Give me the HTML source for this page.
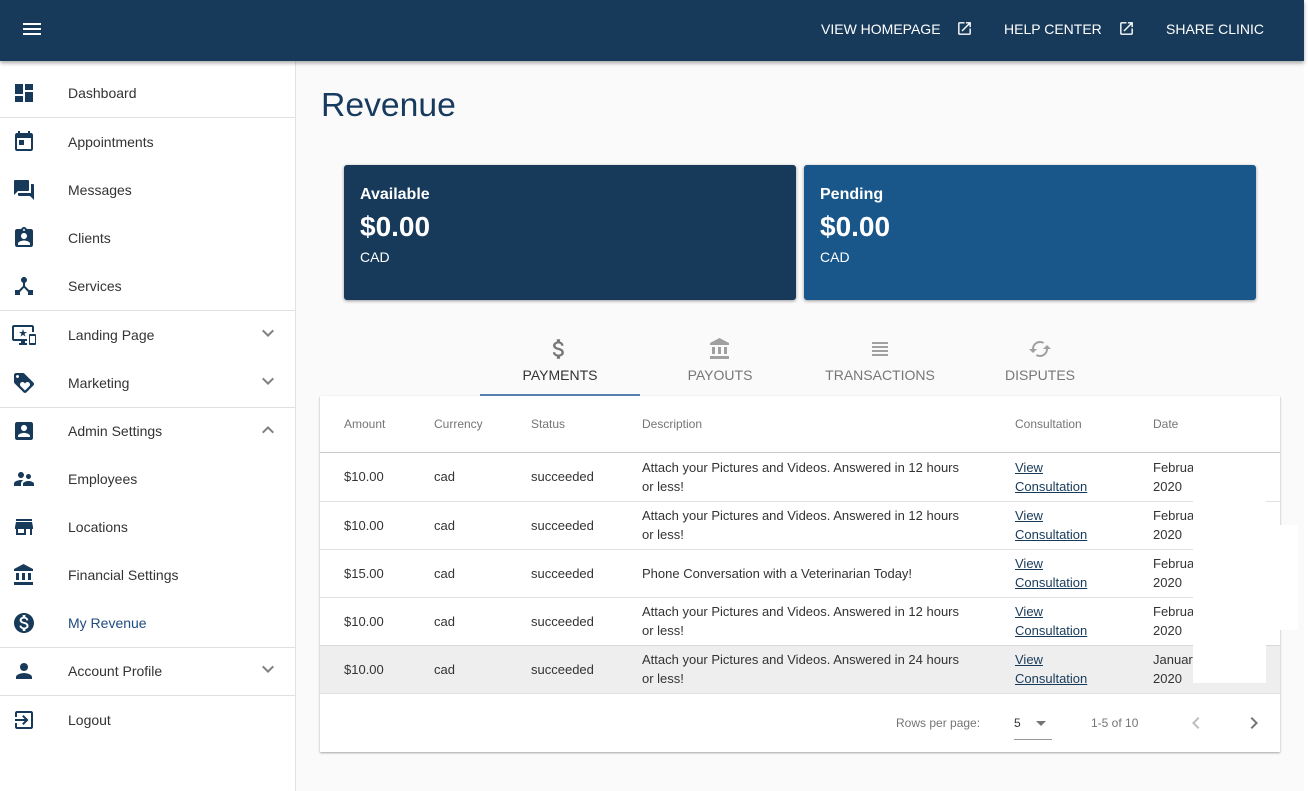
<!DOCTYPE html>
<html><head><meta charset="utf-8"><title>Revenue</title>
<style>
*{box-sizing:border-box}
html,body{margin:0;padding:0;width:1308px;height:791px;overflow:hidden;background:#fff;font-family:"Liberation Sans",sans-serif}
.a{position:absolute;white-space:nowrap}
#main{left:296px;top:61px;width:1008px;height:730px;background:#fafafa}
#top{left:0;top:0;width:1304px;height:61px;background:#173a5a;box-shadow:0 2px 4px rgba(0,0,0,.35);z-index:5}
#side{left:0;top:61px;width:296px;height:730px;background:#fff;border-right:1px solid #e2e2e2}
.t{color:#fff;font-size:14px;line-height:20px;top:19px}
.n{left:68px;font-size:14px;line-height:20px;color:#333}
.h{left:0;width:295px;height:1px;background:#e0e0e0}
svg{position:absolute;display:block}
.i{left:12px;width:24px;height:24px;fill:#173a5a}
.c{left:256px;width:24px;height:24px;fill:#808080}
.card{top:165px;height:135px;width:452px;border-radius:3px;box-shadow:0 1px 3px rgba(0,0,0,.4);color:#fff}
.card b,.card i,.card span{position:absolute;left:16px;font-style:normal;white-space:nowrap}
.card b{top:18px;font-size:16px;line-height:20px;padding-top:2px}
.card i{top:44px;font-size:28px;line-height:36px;font-weight:bold}
.card span{top:83px;font-size:14px;line-height:18px}
.tab{top:366px;width:160px;text-align:center;font-size:14px;line-height:18px;color:#777}
.ti{top:337px;width:24px;height:24px;fill:#a0a0a0}
#tbl{left:320px;top:396px;width:960px;height:356px;background:#fff;box-shadow:0 1px 2px rgba(0,0,0,.35)}
.th{top:416px;font-size:12px;line-height:16px;color:#757575}
.l{left:320px;width:960px;height:1px;background:#e0e0e0}
.d{font-size:13px;line-height:19px;color:#333}
.lk{left:1015px;font-size:13px;line-height:19px;color:#173a5a;text-decoration:underline}
.p{top:715px;font-size:12px;line-height:16px;color:#757575}
</style></head><body>
<svg width="0" height="0" style="position:absolute"><defs>
<symbol id="dash" viewBox="0 0 24 24"><path d="M3 13h8V3H3v10zm0 8h8v-6H3v6zm10 0h8V11h-8v10zm0-18v6h8V3h-8z"/></symbol>
<symbol id="today" viewBox="0 0 24 24"><path d="M19 3h-1V1h-2v2H8V1H6v2H5c-1.11 0-1.99.9-1.99 2L3 19c0 1.1.89 2 2 2h14c1.1 0 2-.9 2-2V5c0-1.1-.9-2-2-2zm0 16H5V8h14v11zM7 10h5v5H7z"/></symbol>
<symbol id="forum" viewBox="0 0 24 24"><path d="M21 6h-2v9H6v2c0 .55.45 1 1 1h11l4 4V7c0-.55-.45-1-1-1zm-4 6V3c0-.55-.45-1-1-1H3c-.55 0-1 .45-1 1v14l4-4h10c.55 0 1-.45 1-1z"/></symbol>
<symbol id="ind" viewBox="0 0 24 24"><path d="M19 3h-4.18C14.4 1.84 13.3 1 12 1c-1.3 0-2.4.84-2.82 2H5c-1.1 0-2 .9-2 2v14c0 1.1.9 2 2 2h14c1.1 0 2-.9 2-2V5c0-1.1-.9-2-2-2zm-7 0c.55 0 1 .45 1 1s-.45 1-1 1-1-.45-1-1 .45-1 1-1zm0 4c1.66 0 3 1.34 3 3s-1.34 3-3 3-3-1.34-3-3 1.34-3 3-3zm6 12H6v-1.4c0-2 4-3.1 6-3.1s6 1.1 6 3.1V19z"/></symbol>
<symbol id="hub" viewBox="0 0 24 24"><path d="M17 16l-4-4V8.82C14.16 8.4 15 7.3 15 6c0-1.66-1.34-3-3-3S9 4.34 9 6c0 1.3.84 2.4 2 2.82V12l-4 4H3v5h5v-3.05l4-4.2 4 4.2V21h5v-5h-4z"/></symbol>
<symbol id="dev" viewBox="0 0 24 24"><path d="M23 11.01L18 11c-.55 0-1 .45-1 1v9c0 .55.45 1 1 1h5c.55 0 1-.45 1-1v-9c0-.55-.45-.99-1-.99zM23 20h-5v-7h5v7zM20 2H2C.89 2 0 2.89 0 4v12c0 1.1.89 2 2 2h7v2H7v2h8v-2h-2v-2h2v-2H2V4h18v5h2V4c0-1.11-.9-2-2-2zm-8.03 7L11 6l-.97 3H7l2.47 1.76-.94 2.91 2.47-1.8 2.47 1.8-.94-2.91L15 9h-3.03z"/></symbol>
<symbol id="loy" viewBox="0 0 24 24"><path d="M21.41 11.58l-9-9C12.05 2.22 11.55 2 11 2H4c-1.1 0-2 .9-2 2v7c0 .55.22 1.05.59 1.42l9 9c.36.36.86.58 1.41.58.55 0 1.05-.22 1.41-.59l7-7c.37-.36.59-.86.59-1.41 0-.55-.23-1.06-.59-1.42zM5.5 7C4.67 7 4 6.33 4 5.5S4.67 4 5.5 4 7 4.67 7 5.5 6.33 7 5.5 7zm11.77 8.27L13 19.54l-4.27-4.27C8.28 14.81 8 14.19 8 13.5c0-1.38 1.12-2.5 2.5-2.5.69 0 1.32.28 1.77.74l.73.72.73-.73c.45-.45 1.08-.73 1.77-.73 1.38 0 2.5 1.12 2.5 2.5 0 .69-.28 1.32-.73 1.77z"/></symbol>
<symbol id="box" viewBox="0 0 24 24"><path d="M3 5v14c0 1.1.89 2 2 2h14c1.1 0 2-.9 2-2V5c0-1.1-.9-2-2-2H5c-1.11 0-2 .9-2 2zm12 4c0 1.66-1.34 3-3 3s-3-1.34-3-3 1.34-3 3-3 3 1.34 3 3zm-9 8c0-2 4-3.1 6-3.1s6 1.1 6 3.1v1H6v-1z"/></symbol>
<symbol id="sup" viewBox="0 0 24 24"><path d="M16.5 12c1.38 0 2.49-1.12 2.49-2.5S17.88 7 16.5 7C15.12 7 14 8.12 14 9.5s1.12 2.5 2.5 2.5zM9 11c1.66 0 2.99-1.34 2.99-3S10.66 5 9 5C7.34 5 6 6.34 6 8s1.34 3 3 3zm7.5 3c-1.83 0-5.5.92-5.5 2.75V19h11v-2.25c0-1.83-3.67-2.75-5.5-2.75zM9 13c-2.33 0-7 1.17-7 3.5V19h7v-2.25c0-.85.33-2.34 2.37-3.47C10.5 13.1 9.66 13 9 13z"/></symbol>
<symbol id="store" viewBox="0 0 24 24"><path d="M20 4H4v2h16V4zm1 10v-2l-1-5H4l-1 5v2h1v6h10v-6h4v6h2v-6h1zm-9 4H6v-4h6v4z"/></symbol>
<symbol id="bank" viewBox="0 0 24 24"><path d="M4 10v7h3v-7H4zm6 0v7h3v-7h-3zM2 22h19v-3H2v3zm14-12v7h3v-7h-3zm-4.5-9L2 6v2h19V6l-9.5-5z"/></symbol>
<symbol id="mon" viewBox="0 0 24 24"><path d="M12 2C6.48 2 2 6.48 2 12s4.48 10 10 10 10-4.48 10-10S17.52 2 12 2zm1.41 16.09V20h-2.67v-1.93c-1.71-.36-3.16-1.46-3.27-3.4h1.96c.1 1.05.82 1.87 2.65 1.87 1.96 0 2.4-.98 2.4-1.59 0-.83-.44-1.61-2.67-2.14-2.48-.6-4.18-1.62-4.18-3.67 0-1.72 1.39-2.84 3.11-3.21V4h2.67v1.95c1.86.45 2.79 1.86 2.85 3.39H14.3c-.05-1.11-.64-1.87-2.22-1.87-1.5 0-2.4.68-2.4 1.64 0 .84.65 1.39 2.67 1.91s4.18 1.39 4.18 3.91c-.01 1.83-1.38 2.83-3.12 3.16z"/></symbol>
<symbol id="person" viewBox="0 0 24 24"><path d="M12 12c2.21 0 4-1.79 4-4s-1.79-4-4-4-4 1.79-4 4 1.79 4 4 4zm0 2c-2.67 0-8 1.34-8 4v2h16v-2c0-2.66-5.33-4-8-4z"/></symbol>
<symbol id="exit" viewBox="0 0 24 24"><path d="M10.09 15.59L11.5 17l5-5-5-5-1.41 1.41L12.67 11H3v2h9.67l-2.58 2.59zM19 3H5c-1.11 0-2 .9-2 2v4h2V5h14v14H5v-4H3v4c0 1.1.89 2 2 2h14c1.1 0 2-.9 2-2V5c0-1.1-.9-2-2-2z"/></symbol>
<symbol id="more" viewBox="0 0 24 24"><path d="M16.59 8.59L12 13.17 7.41 8.59 6 10l6 6 6-6z"/></symbol>
<symbol id="less" viewBox="0 0 24 24"><path d="M12 8l-6 6 1.41 1.41L12 10.83l4.59 4.58L18 14z"/></symbol>
<symbol id="open" viewBox="0 0 24 24"><path d="M19 19H5V5h7V3H5c-1.11 0-2 .9-2 2v14c0 1.1.89 2 2 2h14c1.1 0 2-.9 2-2v-7h-2v7zM14 3v2h3.59l-9.83 9.83 1.41 1.41L19 6.41V10h2V3h-7z"/></symbol>
<symbol id="money" viewBox="0 0 24 24"><path d="M11.8 10.9c-2.27-.59-3-1.2-3-2.15 0-1.09 1.01-1.85 2.7-1.85 1.78 0 2.44.85 2.5 2.1h2.21c-.07-1.72-1.12-3.3-3.21-3.81V3h-3v2.16c-1.94.42-3.5 1.68-3.5 3.61 0 2.31 1.91 3.46 4.7 4.13 2.5.6 3 1.48 3 2.41 0 .69-.49 1.79-2.7 1.79-2.06 0-2.87-.92-2.98-2.1h-2.2c.12 2.19 1.76 3.42 3.68 3.83V21h3v-2.15c1.95-.37 3.5-1.5 3.5-3.55 0-2.84-2.43-3.81-4.7-4.4z"/></symbol>
</defs></svg>

<div class="a" id="main"></div>
<div class="a" id="top"></div>
<div class="a" id="side"></div>

<div style="position:absolute;left:0;top:0;z-index:6">
<svg style="left:20px;top:17px;fill:#fff" width="24" height="24" viewBox="0 0 24 24"><path d="M3 18h18v-2H3v2zm0-5h18v-2H3v2zm0-7v2h18V6H3z"/></svg>
<div class="a t" style="left:821px">VIEW HOMEPAGE</div>
<svg style="left:956px;top:20px;fill:#fff" width="17" height="17"><use href="#open"/></svg>
<div class="a t" style="left:1004px">HELP CENTER</div>
<svg style="left:1118px;top:20px;fill:#fff" width="17" height="17"><use href="#open"/></svg>
<div class="a t" style="left:1166px">SHARE CLINIC</div>
</div>

<!-- sidebar -->
<svg class="i" style="top:81px"><use href="#dash"/></svg><div class="a n" style="top:83px">Dashboard</div>
<div class="a h" style="top:117px"></div>
<svg class="i" style="top:130px"><use href="#today"/></svg><div class="a n" style="top:132px">Appointments</div>
<svg class="i" style="top:178px"><use href="#forum"/></svg><div class="a n" style="top:180px">Messages</div>
<svg class="i" style="top:226px"><use href="#ind"/></svg><div class="a n" style="top:228px">Clients</div>
<svg class="i" style="top:274px"><use href="#hub"/></svg><div class="a n" style="top:276px">Services</div>
<div class="a h" style="top:310px"></div>
<svg class="i" style="top:323px"><use href="#dev"/></svg><div class="a n" style="top:325px">Landing Page</div>
<svg class="c" style="top:321px"><use href="#more"/></svg>
<svg class="i" style="top:371px"><use href="#loy"/></svg><div class="a n" style="top:373px">Marketing</div>
<svg class="c" style="top:369px"><use href="#more"/></svg>
<div class="a h" style="top:407px"></div>
<svg class="i" style="top:419px"><use href="#box"/></svg><div class="a n" style="top:421px">Admin Settings</div>
<svg class="c" style="top:418px"><use href="#less"/></svg>
<svg class="i" style="top:467px"><use href="#sup"/></svg><div class="a n" style="top:469px">Employees</div>
<svg class="i" style="top:515px"><use href="#store"/></svg><div class="a n" style="top:517px">Locations</div>
<svg class="i" style="top:563px"><use href="#bank"/></svg><div class="a n" style="top:565px">Financial Settings</div>
<svg class="i" style="top:611px"><use href="#mon"/></svg><div class="a n" style="top:613px;color:#1f4a80">My Revenue</div>
<div class="a h" style="top:647px"></div>
<svg class="i" style="top:659px"><use href="#person"/></svg><div class="a n" style="top:661px">Account Profile</div>
<svg class="c" style="top:657px"><use href="#more"/></svg>
<div class="a h" style="top:695px"></div>
<svg class="i" style="top:708px"><use href="#exit"/></svg><div class="a n" style="top:710px">Logout</div>

<!-- main -->
<div class="a" style="left:321px;top:85px;font-size:33.7px;line-height:40px;color:#173a5f">Revenue</div>
<div class="a card" style="left:344px;background:#173a5a"><b>Available</b><i>$0.00</i><span>CAD</span></div>
<div class="a card" style="left:804px;background:#19568a"><b>Pending</b><i>$0.00</i><span>CAD</span></div>

<svg class="a ti" style="left:546px;top:336px;width:26px;height:26px;fill:#777"><use href="#money"/></svg>
<svg class="a ti" style="left:708px"><use href="#bank"/></svg>
<svg class="a ti" style="left:868px"><path d="M4 15h16v-2H4v2zm0 4h16v-2H4v2zm0-8h16V9H4v2zm0-6v2h16V5H4z"/></svg>
<svg class="a ti" style="left:1028px"><path d="M19 8l-4 4h3c0 3.31-2.69 6-6 6-1.01 0-1.97-.25-2.8-.7l-1.46 1.46C8.97 19.54 10.43 20 12 20c4.42 0 8-3.58 8-8h3l-4-4zM6 12c0-3.31 2.69-6 6-6 1.01 0 1.97.25 2.8.7l1.46-1.46C15.03 4.46 13.57 4 12 4c-4.42 0-8 3.58-8 8H1l4 4 4-4H6z"/></svg>
<div class="a tab" style="left:480px;color:#333">PAYMENTS</div>
<div class="a tab" style="left:640px">PAYOUTS</div>
<div class="a tab" style="left:800px">TRANSACTIONS</div>
<div class="a tab" style="left:960px">DISPUTES</div>
<div class="a" style="left:480px;top:394px;width:160px;height:2px;background:#5a80b5"></div>

<div class="a" id="tbl"></div>
<div class="a th" style="left:344px">Amount</div>
<div class="a th" style="left:434px">Currency</div>
<div class="a th" style="left:531px">Status</div>
<div class="a th" style="left:642px">Description</div>
<div class="a th" style="left:1015px">Consultation</div>
<div class="a th" style="left:1153px">Date</div>
<div class="a l" style="top:452px;background:#c8c8c8"></div>
<div class="a l" style="top:501px"></div>
<div class="a l" style="top:549px"></div>
<div class="a l" style="top:597px"></div>
<div class="a" style="left:320px;top:645px;width:960px;height:49px;background:#eee;border-top:1px solid #d8d8d8;border-bottom:1px solid #e0e0e0"></div>

<div class="a d" style="left:344px;top:467px">$10.00</div><div class="a d" style="left:434px;top:467px">cad</div><div class="a d" style="left:531px;top:467px">succeeded</div>
<div class="a d" style="left:642px;top:458px">Attach your Pictures and Videos. Answered in 12 hours<br>or less!</div>
<div class="a lk" style="top:458px">View<br>Consultation</div><div class="a d" style="left:1153px;top:458px">February<br>2020</div>

<div class="a d" style="left:344px;top:516px">$10.00</div><div class="a d" style="left:434px;top:516px">cad</div><div class="a d" style="left:531px;top:516px">succeeded</div>
<div class="a d" style="left:642px;top:506px">Attach your Pictures and Videos. Answered in 12 hours<br>or less!</div>
<div class="a lk" style="top:506px">View<br>Consultation</div><div class="a d" style="left:1153px;top:506px">February<br>2020</div>

<div class="a d" style="left:344px;top:564px">$15.00</div><div class="a d" style="left:434px;top:564px">cad</div><div class="a d" style="left:531px;top:564px">succeeded</div>
<div class="a d" style="left:642px;top:564px">Phone Conversation with a Veterinarian Today!</div>
<div class="a lk" style="top:554px">View<br>Consultation</div><div class="a d" style="left:1153px;top:554px">February<br>2020</div>

<div class="a d" style="left:344px;top:612px">$10.00</div><div class="a d" style="left:434px;top:612px">cad</div><div class="a d" style="left:531px;top:612px">succeeded</div>
<div class="a d" style="left:642px;top:602px">Attach your Pictures and Videos. Answered in 12 hours<br>or less!</div>
<div class="a lk" style="top:602px">View<br>Consultation</div><div class="a d" style="left:1153px;top:602px">February<br>2020</div>

<div class="a d" style="left:344px;top:660px">$10.00</div><div class="a d" style="left:434px;top:660px">cad</div><div class="a d" style="left:531px;top:660px">succeeded</div>
<div class="a d" style="left:642px;top:650px">Attach your Pictures and Videos. Answered in 24 hours<br>or less!</div>
<div class="a lk" style="top:650px">View<br>Consultation</div><div class="a d" style="left:1153px;top:650px">January<br>2020</div>

<!-- white patches -->
<div class="a" style="left:1193px;top:453px;width:73px;height:230px;background:#fff"></div>
<div class="a" style="left:1266px;top:525px;width:32px;height:105px;background:#fff"></div>

<!-- pagination -->
<div class="a p" style="left:896px">Rows per page:</div>
<div class="a d" style="left:1014px;top:714px;font-size:12px">5</div>
<svg class="a" style="left:1029px;top:711px;width:24px;height:24px;fill:#757575"><path d="M7 10l5 5 5-5z"/></svg>
<div class="a" style="left:1014px;top:739px;width:38px;height:1px;background:#999"></div>
<div class="a p" style="left:1091px">1-5 of 10</div>
<svg class="a" style="left:1184px;top:711px;width:24px;height:24px;fill:#bdbdbd"><path d="M15.41 7.41L14 6l-6 6 6 6 1.41-1.41L10.83 12z"/></svg>
<svg class="a" style="left:1242px;top:711px;width:24px;height:24px;fill:#757575"><path d="M10 6L8.59 7.41 13.17 12l-4.58 4.59L10 18l6-6z"/></svg>
</body></html>
